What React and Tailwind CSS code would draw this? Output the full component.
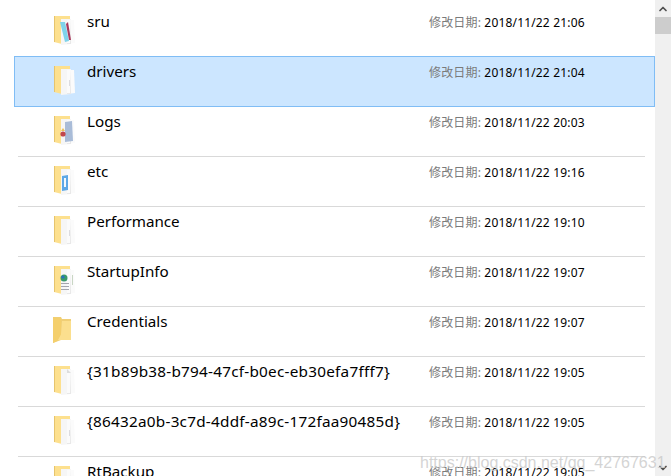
import { ChevronUp, ChevronDown } from "lucide-react";

const rows = [
  { name: "sru", time: "21:06", art: "sru", line: false },
  { name: "drivers", time: "21:04", art: "blank", selected: true, line: false },
  { name: "Logs", time: "20:03", art: "logs", line: false },
  { name: "etc", time: "19:16", art: "etc", line: true },
  { name: "Performance", time: "19:10", art: "blank", line: true },
  { name: "StartupInfo", time: "19:07", art: "startup", line: true },
  { name: "Credentials", time: "19:07", art: "empty", line: true },
  { name: "{31b89b38-b794-47cf-b0ec-eb30efa7fff7}", time: "19:05", art: "single", line: true, guid: true },
  { name: "{86432a0b-3c7d-4ddf-a89c-172faa90485d}", time: "19:05", art: "blank", line: true, guid: true },
  { name: "RtBackup", time: "19:05", art: "blank", line: true },
];

const FolderIcon = ({ art }) => {
  if (art === "empty") {
    return (
      <svg width="24" height="30" viewBox="0 0 24 30" className="shrink-0">
        <path d="M1 2 L9 2 L10 4 L19 4 L19 25 L9 25 L1 28 Z" fill="#f0cf76" />
        <path d="M10 6 L19 6 L19 25 L6 25 L9 19 Z" fill="#fbdf8e" />
        <path d="M1 2 L9 4 L9 19 L5 26 L1 28 Z" fill="#f4cf6c" />
      </svg>
    );
  }

  return (
    <svg width="24" height="30" viewBox="0 0 24 30" className="shrink-0">
      <path d="M2 1 L18 1 L18 4 L10 4 L10 29 L2 27 Z" fill="#fde08e" />
      <path d="M2 1 L3 1 L3 27 L2 27 Z" fill="#e6c46d" />
      <path d="M9 4 L19 4 L19 29 L9 30 Z" fill="#f6f6f6" />
      <path d="M15 5 L22 5 L23 28 L15 29 Z" fill="#fbfbfb" />
      <path d="M19 4 L19 29 L15 29 L15 28 L18 28 Z" fill="#e8e8e8" />
      {art === "sru" && (
        <>
          <path d="M8 7 L13 7 L17 26 L13 27 Z" fill="#7fd3ea" />
          <path d="M14 9 L16 7 L19 25 L17 25 Z" fill="#a83a5c" />
        </>
      )}
      {art === "logs" && (
        <>
          <path d="M13 7 L20 6 L21 26 L13 27 Z" fill="#a9bcd8" />
          <circle cx="11" cy="19" r="2.6" fill="#c2474d" />
          <path d="M11 13 L13 16 L9 16 Z" fill="#e9c25c" />
        </>
      )}
      {art === "etc" && (
        <>
          <path d="M10 11 L16 10 L16 25 L10 26 Z" fill="#5da8e6" />
          <path d="M12 13 L14 13 L14 22 L12 22 Z" fill="#f2f8fd" />
        </>
      )}
      {art === "startup" && (
        <>
          <circle cx="12" cy="13" r="3.5" fill="#3a9a6a" />
          <circle cx="11" cy="12" r="1.6" fill="#2a6fc0" />
          <path d="M9 18 L17 18 L17 19 L9 19 Z M9 21 L17 21 L17 22 L9 22 Z M9 24 L17 24 L17 25 L9 25 Z" fill="#a5a5ad" />
          <path d="M20 10 L21 10 L21 20 L20 20 Z" fill="#c9d6c4" />
        </>
      )}
      {art === "single" && <path d="M15 4 L19 8 L15 8 Z" fill="#dddddd" />}
      {art === "blank" && <path d="M17 15 L18 15 L18 21 L17 21 Z" fill="#dcdce0" />}
    </svg>
  );
};

const FileRow = ({ name, time, art, selected, line, guid }) => {
  return (
    <div className="relative h-[50px]">
      {line && <div className="ml-[18px] h-px w-[627px] bg-[#d9d9d9]" />}
      <div
        className={
          selected
            ? "absolute left-[14px] top-0 flex h-[51px] w-[641px] border border-[#80bdf5] bg-[#cce6ff] pl-[37px]"
            : "absolute left-[14px] top-0 flex h-[50px] w-[641px] border border-transparent pl-[37px]"
        }
      >
        <div className="mt-[8px]">
          <FolderIcon art={art} />
        </div>
        <span
          className={
            guid
              ? "ml-[11px] mt-[2px] w-[342px] truncate text-[15.3px] leading-[24px] tracking-[0.24px] text-black"
              : "ml-[11px] mt-[2px] w-[342px] truncate text-[15.2px] leading-[24px] text-black"
          }
        >
          {name}
        </span>
        <span className="mt-[7px] whitespace-nowrap text-[12px] leading-[18px] tracking-[0.17px] text-black">
          <span className="text-[#7a7a7a]">修改日期: </span>
          2018/11/22 {time}
        </span>
      </div>
    </div>
  );
};

const App = () => {
  return (
    <div className="relative flex h-[476px] w-[671px] overflow-hidden bg-white font-['Noto_Sans','Noto_Sans_CJK_SC',sans-serif]">
      <div className="w-[655px] pt-[6px]">
        {rows.map((row) => (
          <FileRow key={row.name} {...row} />
        ))}
      </div>

      <div className="flex w-4 flex-col items-center justify-between bg-[#f0f0f0]">
        <div className="w-full">
          <div className="flex h-[17px] items-center justify-center">
            <ChevronUp size={12} strokeWidth={3.5} color="#505050" />
          </div>
          <div className="h-[17px] w-full bg-[#cdcdcd]" />
        </div>
        <div className="flex h-[17px] items-center justify-center">
          <ChevronDown size={12} strokeWidth={3.5} color="#505050" />
        </div>
      </div>

      <span className="absolute left-[420px] top-[451px] whitespace-nowrap font-['Liberation_Sans',sans-serif] text-[16px] leading-[24px] text-[#c9c9c9]/80">
        https://blog.csdn.net/qq_42767631
      </span>
    </div>
  );
};

export default App;
